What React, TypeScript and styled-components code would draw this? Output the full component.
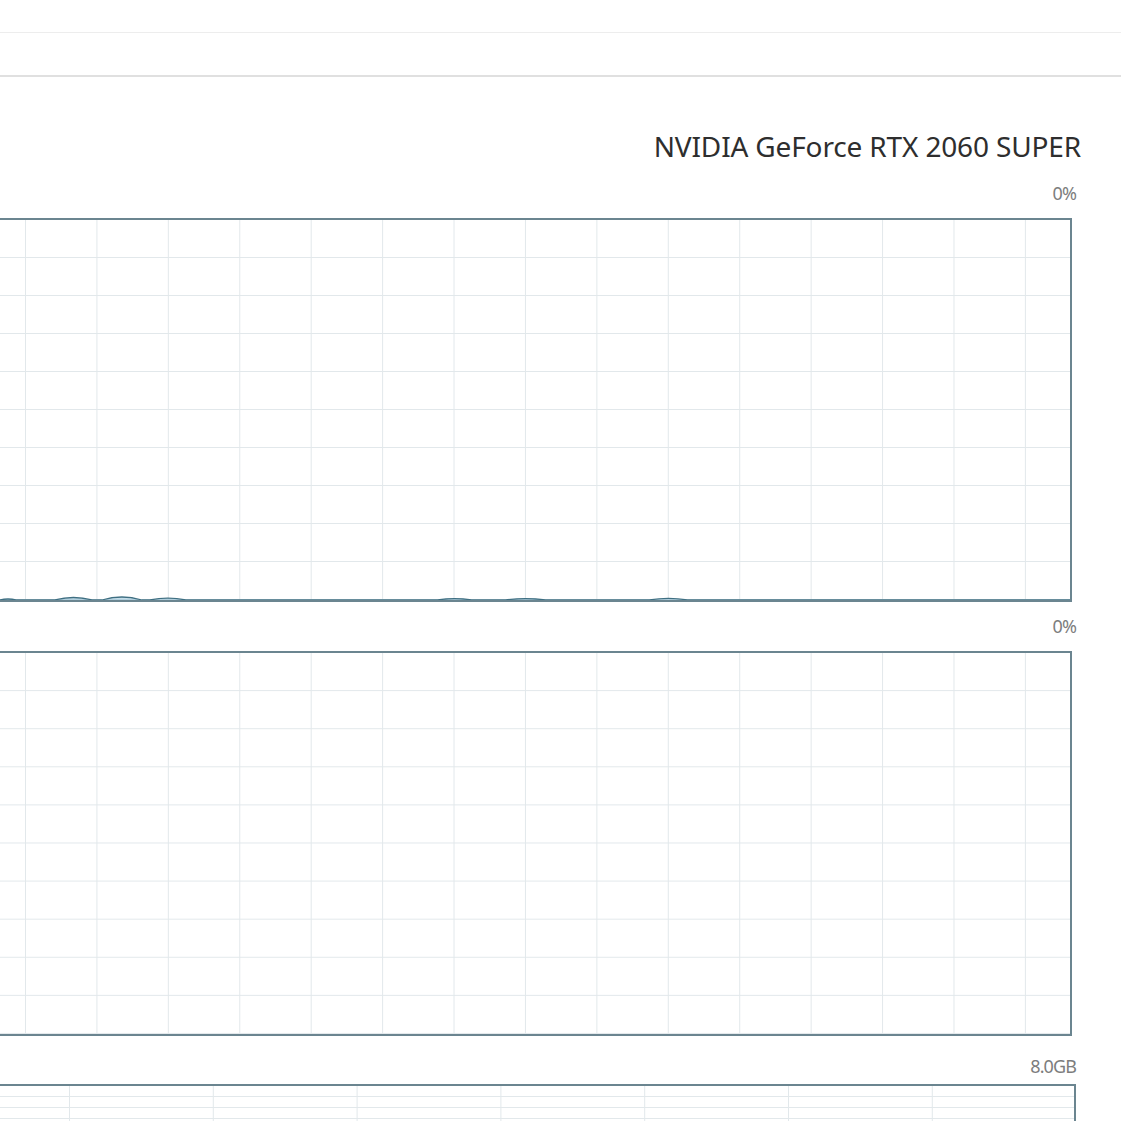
import React from "react";
import styled, { createGlobalStyle } from "styled-components";

const GlobalStyle = createGlobalStyle`
  html, body {
    margin: 0;
    padding: 0;
    background: #fff;
    overflow: hidden;
  }
  body {
    font-family: "Noto Sans", "Open Sans", sans-serif;
  }
`;

const Page = styled.div`
  width: 1121px;
  height: 1121px;
  overflow: hidden;
  background: #fff;
`;

const TopStrip = styled.div`
  height: 32px;
  border-bottom: 1px solid #ededed;
`;

const TabBar = styled.div`
  height: 42px;
  border-bottom: 2px solid #e0e0e0;
`;

const Content = styled.div`
  display: flex;
  flex-direction: column;
  padding-right: 45px;
`;

const Title = styled.div`
  margin-top: 52px;
  margin-right: -5px;
  height: 34px;
  line-height: 34px;
  font-size: 28px;
  letter-spacing: -0.15px;
  color: #2e2e2e;
  text-align: right;
  white-space: nowrap;
`;

const Label = styled.div<{ $top: number; $bottom: number }>`
  margin-top: ${(p) => p.$top}px;
  margin-bottom: ${(p) => p.$bottom}px;
  height: 18px;
  line-height: 18px;
  font-size: 18px;
  color: #7d7d7d;
  text-align: right;
  letter-spacing: -0.9px;
`;

const Chart = styled.div<{
  $height: number;
  $colW: number;
  $colX: number;
  $rowH: string;
  $inset: number;
}>`
  height: ${(p) => p.$height}px;
  margin-right: ${(p) => p.$inset}px;
  border: 2px solid #6b8590;
  border-left: none;
  display: flex;
  flex-direction: column;
  justify-content: flex-end;
  background-color: #fff;
  background-image: linear-gradient(to right, #e2e8eb 1px, transparent 1px),
    linear-gradient(to bottom, transparent calc(100% - 1px), #e2e8eb calc(100% - 1px));
  background-size: ${(p) => p.$colW}px 100%, 100% ${(p) => p.$rowH};
  background-position: ${(p) => p.$colX}px 0, 0 0;
`;

const Wave = styled.svg`
  display: block;
  width: 100%;
  height: 6px;
`;

const bumps: [number, number, number][] = [
  [0, 16, 1],
  [55, 92, 2.5],
  [102, 142, 3],
  [150, 186, 1.8],
  [438, 472, 1.4],
  [506, 546, 1.4],
  [650, 688, 1.6],
];

const wavePath = () => {
  let d = "M0 6";
  for (const [a, b, h] of bumps) {
    const m = (a + b) / 2;
    d += ` L${a} 6 Q${m} ${6 - h * 2} ${b} 6`;
  }
  d += " L1071 6";
  return d;
};

const UsageWave: React.FC = () => (
  <Wave viewBox="0 0 1071 6" preserveAspectRatio="none">
    <path d={wavePath()} fill="rgba(90,160,195,0.35)" stroke="#3f6f82" strokeWidth="1.3" />
  </Wave>
);

const App: React.FC = () => {
  return (
    <Page>
      <GlobalStyle />
      <TopStrip />
      <TabBar />
      <Content>
        <Title>NVIDIA GeForce RTX 2060 SUPER</Title>
        <Label $top={21} $bottom={16}>0%</Label>
        <Chart $height={380} $colW={71.43} $colX={25} $rowH="10%" $inset={4}>
          <UsageWave />
        </Chart>
        <Label $top={15} $bottom={16}>0%</Label>
        <Chart $height={381} $colW={71.43} $colX={25} $rowH="10%" $inset={4} />
        <Label $top={21} $bottom={9}>8.0GB</Label>
        <Chart $height={120} $colW={143.8} $colX={69} $rowH="11px" $inset={0} />
      </Content>
    </Page>
  );
};

export default App;
